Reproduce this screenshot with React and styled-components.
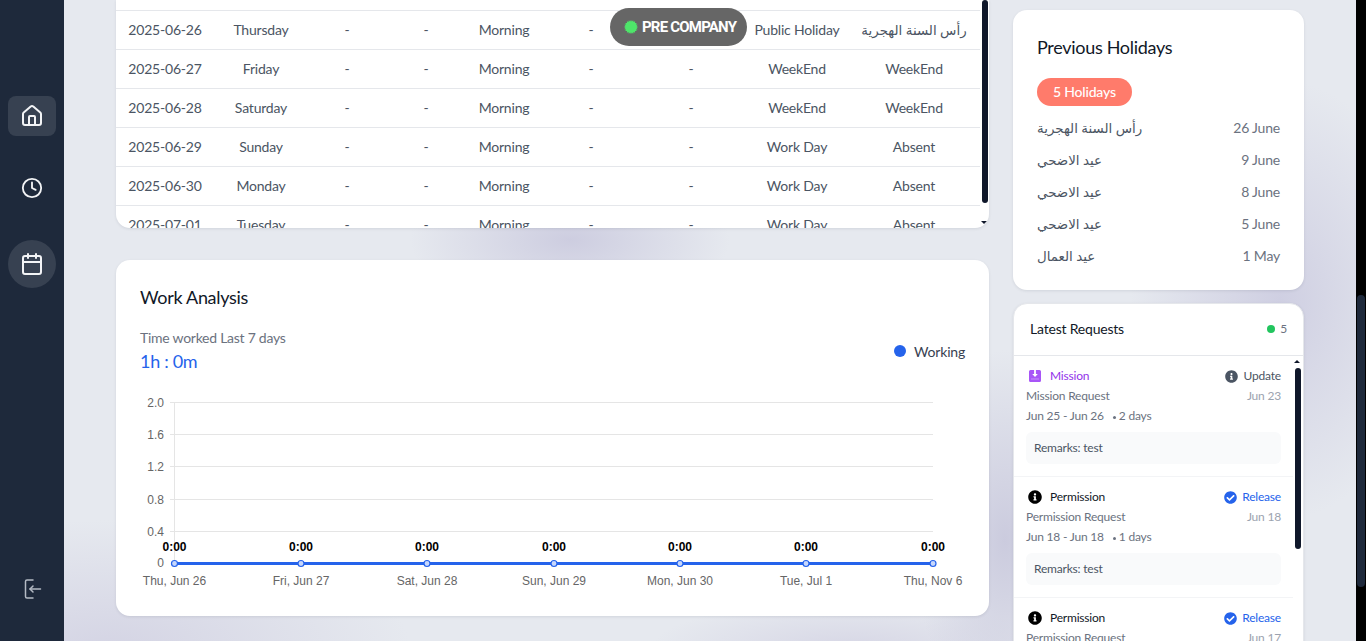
import React from "react";
import styled, { createGlobalStyle } from "styled-components";
import { House, Clock, Calendar } from "lucide-react";
import { FaInfoCircle, FaCheckCircle } from "react-icons/fa";

const GlobalStyle = createGlobalStyle`
  html, body {
    margin: 0;
    height: 100%;
    overflow: hidden;
  }
  body {
    font-family: "Lato", "DejaVu Sans", sans-serif;
    letter-spacing: -0.2px;
    color: #4b5563;
  }
  * {
    box-sizing: border-box;
  }
`;

const Page = styled.div`
  display: flex;
  height: 641px;
  overflow: hidden;
  background:
    radial-gradient(ellipse 160px 70px at 570px 240px, #cdcde0 0%, rgba(205, 205, 224, 0) 100%),
    radial-gradient(ellipse 150px 220px at 1280px 300px, #cfcfe2 0%, rgba(207, 207, 226, 0) 100%),
    radial-gradient(ellipse 90px 190px at 1005px 540px, #cbcbde 0%, rgba(203, 203, 222, 0) 100%),
    radial-gradient(ellipse 300px 130px at 110px 650px, #d4d4e4 0%, rgba(212, 212, 228, 0) 100%),
    radial-gradient(ellipse 200px 50px at 850px 650px, #d6d6e5 0%, rgba(214, 214, 229, 0) 100%),
    #e6e9ef;
`;

const Sidebar = styled.nav`
  width: 64px;
  flex-shrink: 0;
  background: #1e293b;
  display: flex;
  flex-direction: column;
  align-items: center;
  padding: 96px 0 40px;
  gap: 32px;
`;

const NavButton = styled.div`
  width: 48px;
  height: ${(p) => (p.$round ? "48px" : "40px")};
  border-radius: ${(p) => (p.$round ? "50%" : "8px")};
  background: ${(p) => (p.$active ? "#374151" : "transparent")};
  color: #f3f4f6;
  display: flex;
  align-items: center;
  justify-content: center;
`;

const ExitButton = styled(NavButton)`
  margin-top: auto;
  height: 24px;
  color: #b4bac4;
`;

const Content = styled.main`
  flex: 1;
  display: grid;
  grid-template-columns: 873px 291px;
  column-gap: 24px;
  align-items: start;
  padding-left: 52px;
`;

const Column = styled.div`
  display: flex;
  flex-direction: column;
  gap: 32px;
`;

const SideColumn = styled.div`
  display: flex;
  flex-direction: column;
  gap: 13px;
  padding-top: 10px;
`;

const Card = styled.section`
  background: #fff;
  border-radius: 14px;
  box-shadow: 0 1px 3px rgba(30, 41, 59, 0.1);
`;

const TableCard = styled(Card)`
  position: relative;
  height: 228px;
  overflow: hidden;
  border-radius: 0 0 14px 14px;
`;

const Row = styled.div`
  display: grid;
  grid-template-columns: 98px 94px 78px 80px 76px 98px 102px 110px 124px;
  width: 864px;
  height: ${(p) => (p.$sliver ? "11px" : "39px")};
  padding-bottom: ${(p) => (p.$sliver ? "0" : "2px")};
  border-bottom: 1px solid #e5e7eb;
  align-items: center;
  font-size: 14px;
  color: #4b5563;
`;

const Cell = styled.div`
  text-align: center;
  white-space: nowrap;
`;

const Arabic = styled.span`
  font-size: 13.4px;
  letter-spacing: 0;
`;

const HolidayName = styled(Arabic)`
  display: block;
  padding-top: 2px;
`;

const CompanyPill = styled.div`
  position: absolute;
  left: 494px;
  top: 8px;
  width: 137px;
  height: 38px;
  padding: 0 0 1px 14px;
  border-radius: 19px;
  background: #666;
  color: #fff;
  font-family: "Roboto", sans-serif;
  font-weight: 700;
  font-size: 15px;
  letter-spacing: -0.8px;
  display: flex;
  align-items: center;
  gap: 4px;
`;

const Burst = styled.svg`
  width: 14px;
  height: 14px;
  flex-shrink: 0;
`;

const ScrollThumb = styled.div`
  position: absolute;
  width: 6px;
  border-radius: 3px;
  background: #0f172a;
  left: ${(p) => p.$left}px;
  top: ${(p) => p.$top}px;
  height: ${(p) => p.$height}px;
`;

const ScrollArrow = styled.div`
  position: absolute;
  left: ${(p) => p.$left}px;
  top: ${(p) => p.$top}px;
  width: 0;
  height: 0;
  border-left: 3px solid transparent;
  border-right: 3px solid transparent;
  border-bottom: ${(p) => (p.$up ? "3px solid #0f172a" : "none")};
  border-top: ${(p) => (p.$up ? "none" : "3px solid #0f172a")};
`;

const ChartCard = styled(Card)`
  height: 356px;
  padding: 24px 24px 0;
`;

const CardTitle = styled.h2`
  margin: 0;
  height: 28px;
  padding-bottom: 2px;
  font-size: 18px;
  font-weight: 400;
  line-height: 26px;
  letter-spacing: -0.3px;
  color: #111827;
`;

const ChartHead = styled.div`
  display: flex;
  justify-content: space-between;
  align-items: center;
  margin-top: 16px;
`;

const Muted = styled.div`
  font-size: 14px;
  line-height: 20px;
  letter-spacing: -0.26px;
  color: #6b7280;
`;

const Worked = styled.div`
  height: 28px;
  font-size: 18px;
  line-height: 26px;
  letter-spacing: -0.3px;
  color: #2563eb;
`;

const Legend = styled.div`
  display: flex;
  align-items: center;
  gap: 8px;
  padding-bottom: 2px;
  font-size: 14px;
  color: #374151;
`;

const LegendDot = styled.span`
  width: 12px;
  height: 12px;
  border-radius: 50%;
  background: #2563eb;
`;

const ChartSvg = styled.svg`
  display: block;
  margin-top: 14px;
  width: 825px;
  height: 205px;
  font-family: "Liberation Sans", Arial, sans-serif;
  letter-spacing: 0;
`;

const HolidayCard = styled(Card)`
  height: 280px;
  padding: 24px;
`;

const HolidayBadge = styled.div`
  display: inline-block;
  margin-top: 16px;
  height: 28px;
  padding: 0 16px;
  border-radius: 14px;
  background: #ff7b6b;
  color: #fff;
  font-size: 14px;
  font-weight: 500;
  line-height: 28px;
`;

const HolidayList = styled.div`
  margin-top: 6px;
`;

const HolidayRow = styled.div`
  display: flex;
  justify-content: space-between;
  align-items: center;
  height: 32px;
  padding-bottom: 2px;
  font-size: 14px;
  color: #4b5563;
`;

const HolidayDate = styled.span`
  color: #6b7280;
`;

const RequestsCard = styled(Card)`
  position: relative;
  height: 420px;
  overflow: hidden;
  border: 1px solid #e5e7eb;
`;

const RequestsHead = styled.div`
  display: flex;
  justify-content: space-between;
  align-items: center;
  height: 52px;
  padding: 0 16px 2px;
  border-bottom: 1px solid #e5e7eb;
  font-size: 14px;
  color: #111827;
`;

const Count = styled.span`
  display: flex;
  align-items: center;
  gap: 5px;
  font-size: 12px;
  color: #6b7280;
`;

const GreenDot = styled.span`
  width: 8px;
  height: 8px;
  border-radius: 50%;
  background: #22c55e;
`;

const RequestItem = styled.article`
  width: 279px;
  padding: 10px 12px 12px;
  border-bottom: 1px solid #f3f4f6;
`;

const ItemLine = styled.div`
  display: flex;
  justify-content: space-between;
  align-items: center;
  height: 20px;
  padding-bottom: 2px;
  font-size: 12px;
  color: #6b7280;
`;

const KindLabel = styled.span`
  display: flex;
  align-items: center;
  gap: 8px;
  padding-left: 2px;
  color: ${(p) => p.$color};
`;

const StatusLabel = styled.span`
  display: flex;
  align-items: center;
  gap: 5px;
  color: ${(p) => p.$color};
`;

const IconSlot = styled.span`
  width: 14px;
  padding-top: 2px;
  display: flex;
  justify-content: center;
  font-size: 14px;
`;

const ItemDate = styled.span`
  color: #9ca3af;
`;

const Bullet = styled.span`
  display: inline-block;
  width: 3px;
  height: 3px;
  background: #6b7280;
  border-radius: 50%;
  margin: 0 3px 1px 9px;
`;

const Remarks = styled.div`
  margin-top: 6px;
  height: 32px;
  padding: 0 8px;
  border-radius: 6px;
  background: #f9fafb;
  font-size: 12px;
  line-height: 32px;
  color: #4b5563;
`;

const PageScroll = styled.aside`
  position: relative;
  width: 10px;
  flex-shrink: 0;
  background: #000;
`;

const PageThumb = styled.div`
  position: absolute;
  left: 1px;
  top: 295px;
  width: 8px;
  height: 292px;
  border-radius: 4px;
  background: #1e293b;
`;

const rows = [
  ["2025-06-26", "Thursday", "-", "-", "Morning", "-", "", "Public Holiday", "رأس السنة الهجرية"],
  ["2025-06-27", "Friday", "-", "-", "Morning", "-", "-", "WeekEnd", "WeekEnd"],
  ["2025-06-28", "Saturday", "-", "-", "Morning", "-", "-", "WeekEnd", "WeekEnd"],
  ["2025-06-29", "Sunday", "-", "-", "Morning", "-", "-", "Work Day", "Absent"],
  ["2025-06-30", "Monday", "-", "-", "Morning", "-", "-", "Work Day", "Absent"],
  ["2025-07-01", "Tuesday", "-", "-", "Morning", "-", "-", "Work Day", "Absent"],
];

const holidays = [
  ["رأس السنة الهجرية", "26 June"],
  ["عيد الاضحي", "9 June"],
  ["عيد الاضحي", "8 June"],
  ["عيد الاضحي", "5 June"],
  ["عيد العمال", "1 May"],
];

const yTicks = [
  ["2.0", 402.5],
  ["1.6", 434.5],
  ["1.2", 466.5],
  ["0.8", 499.5],
  ["0.4", 531.5],
];

const points = [
  [174.5, "Thu, Jun 26"],
  [301, "Fri, Jun 27"],
  [427, "Sat, Jun 28"],
  [554, "Sun, Jun 29"],
  [680, "Mon, Jun 30"],
  [806, "Tue, Jul 1"],
  [933, "Thu, Nov 6"],
];

const requests = [
  {
    kind: "Mission",
    color: "#9333ea",
    status: "Update",
    statusColor: "#4b5563",
    sub: "Mission Request",
    date: "Jun 23",
    range: "Jun 25 - Jun 26",
    days: "2 days",
  },
  {
    kind: "Permission",
    color: "#111827",
    status: "Release",
    statusColor: "#2563eb",
    sub: "Permission Request",
    date: "Jun 18",
    range: "Jun 18 - Jun 18",
    days: "1 days",
  },
  {
    kind: "Permission",
    color: "#111827",
    status: "Release",
    statusColor: "#2563eb",
    sub: "Permission Request",
    date: "Jun 17",
    range: "Jun 17 - Jun 17",
    days: "1 days",
  },
];

const isArabic = (text) => /[\u0600-\u06FF]/.test(text);

// 20 point star, looks like the little green spinner dot in the pill
const burstPoints = Array.from({ length: 40 }, (_, i) => {
  const r = i % 2 ? 5.6 : 7;
  const a = (i * Math.PI) / 20;
  return `${(7 + r * Math.cos(a)).toFixed(2)},${(7 + r * Math.sin(a)).toFixed(2)}`;
}).join(" ");

function MissionIcon() {
  return (
    <svg width="14" height="14" viewBox="0 0 14 14">
      <path
        d="M2.500 1H11.500A1.500 1.500 0 0 1 13 2.500V11.500A1.500 1.500 0 0 1 11.500 13H2.500A1.500 1.500 0 0 1 1 11.500V2.500A1.500 1.500 0 0 1 2.500 1Z"
        fill="#a855f7"
      />
      <path d="M6.100 1H7.900V5H9.800L7 8L4.200 5H6.100Z" fill="#fff" />
      <path d="M3 10H11" stroke="#fff" strokeWidth="0.700" strokeOpacity="0.500" />
    </svg>
  );
}

function ExitIcon() {
  return (
    <svg width="20" height="20" viewBox="0 0 20 20" fill="none" stroke="currentColor" strokeWidth="1.500" strokeLinecap="round" strokeLinejoin="round">
      <path d="M11 1H5A1.500 1.500 0 0 0 3.500 2.500V17.500A1.500 1.500 0 0 0 5 19H11" />
      <path d="M18.500 10H8" />
      <path d="M11 7L8 10L11 13" />
    </svg>
  );
}

function WorkChart() {
  return (
    <ChartSvg viewBox="140 390 825 205">
      {yTicks.map(([label, y]) => (
        <g key={label}>
          <line x1="170" x2="933" y1={y} y2={y} stroke="#e5e5e5" />
          <text x="164" y={y + 4} textAnchor="end" fontSize="12" fill="#666">
            {label}
          </text>
        </g>
      ))}
      <line x1="174.500" x2="174.500" y1="402" y2="563" stroke="#e5e5e5" />
      <line x1="171" x2="174" y1="563.500" y2="563.500" stroke="#e5e5e5" />
      <text x="164" y="567" textAnchor="end" fontSize="12" fill="#666">
        0
      </text>
      <line x1="174.500" x2="933" y1="563.500" y2="563.500" stroke="#2563eb" strokeWidth="3" />
      {points.map(([x, label]) => (
        <g key={label}>
          <circle cx={x} cy="563.500" r="3" fill="#c7d7fc" stroke="#2563eb" strokeWidth="1.200" />
          <text x={x} y="551" textAnchor="middle" fontSize="12" fontWeight="700" fill="#000">
            0:00
          </text>
          <text x={x} y="585" textAnchor="middle" fontSize="12" fill="#666">
            {label}
          </text>
        </g>
      ))}
    </ChartSvg>
  );
}

function RequestCard({ item }) {
  return (
    <RequestItem>
      <ItemLine>
        <KindLabel $color={item.color}>
          <IconSlot>{item.kind === "Mission" ? <MissionIcon /> : <FaInfoCircle color="#000" />}</IconSlot>
          {item.kind}
        </KindLabel>
        <StatusLabel $color={item.statusColor}>
          <IconSlot>
            {item.status === "Update" ? <FaInfoCircle size={13} color="#4b5563" /> : <FaCheckCircle size={13} color="#2563eb" />}
          </IconSlot>
          {item.status}
        </StatusLabel>
      </ItemLine>
      <ItemLine>
        <span>{item.sub}</span>
        <ItemDate>{item.date}</ItemDate>
      </ItemLine>
      <ItemLine>
        <span>
          {item.range}
          <Bullet />
          {item.days}
        </span>
      </ItemLine>
      <Remarks>Remarks: test</Remarks>
    </RequestItem>
  );
}

export default function App() {
  return (
    <>
      <GlobalStyle />
      <Page>
        <Sidebar>
          <NavButton $active>
            <House size={24} strokeWidth={2} />
          </NavButton>
          <NavButton>
            <Clock size={22} strokeWidth={2} />
          </NavButton>
          <NavButton $active $round>
            <Calendar size={24} strokeWidth={2} />
          </NavButton>
          <ExitButton>
            <ExitIcon />
          </ExitButton>
        </Sidebar>
        <Content>
          <Column>
            <TableCard>
              <Row $sliver />
              {rows.map((row) => (
                <Row key={row[0]}>
                  {row.map((value, i) => (
                    <Cell key={i}>{isArabic(value) ? <Arabic>{value}</Arabic> : value}</Cell>
                  ))}
                </Row>
              ))}
              <CompanyPill>
                <Burst viewBox="0 0 14 14">
                  <polygon points={burstPoints} fill="#4ee56a" />
                </Burst>
                PRE COMPANY
              </CompanyPill>
              <ScrollThumb $left={866} $top={0} $height={203} />
              <ScrollArrow $left={865} $top={221} />
            </TableCard>
            <ChartCard>
              <CardTitle>Work Analysis</CardTitle>
              <ChartHead>
                <div>
                  <Muted>Time worked Last 7 days</Muted>
                  <Worked>1h : 0m</Worked>
                </div>
                <Legend>
                  <LegendDot />
                  Working
                </Legend>
              </ChartHead>
              <WorkChart />
            </ChartCard>
          </Column>
          <SideColumn>
            <HolidayCard>
              <CardTitle>Previous Holidays</CardTitle>
              <HolidayBadge>5 Holidays</HolidayBadge>
              <HolidayList>
                {holidays.map(([name, date]) => (
                  <HolidayRow key={date}>
                    <HolidayName>{name}</HolidayName>
                    <HolidayDate>{date}</HolidayDate>
                  </HolidayRow>
                ))}
              </HolidayList>
            </HolidayCard>
            <RequestsCard>
              <RequestsHead>
                Latest Requests
                <Count>
                  <GreenDot />5
                </Count>
              </RequestsHead>
              {requests.map((item) => (
                <RequestCard key={item.date} item={item} />
              ))}
              <ScrollArrow $up $left={280} $top={56} />
              <ScrollThumb $left={281} $top={64} $height={181} />
            </RequestsCard>
          </SideColumn>
        </Content>
        <PageScroll>
          <PageThumb />
        </PageScroll>
      </Page>
    </>
  );
}
